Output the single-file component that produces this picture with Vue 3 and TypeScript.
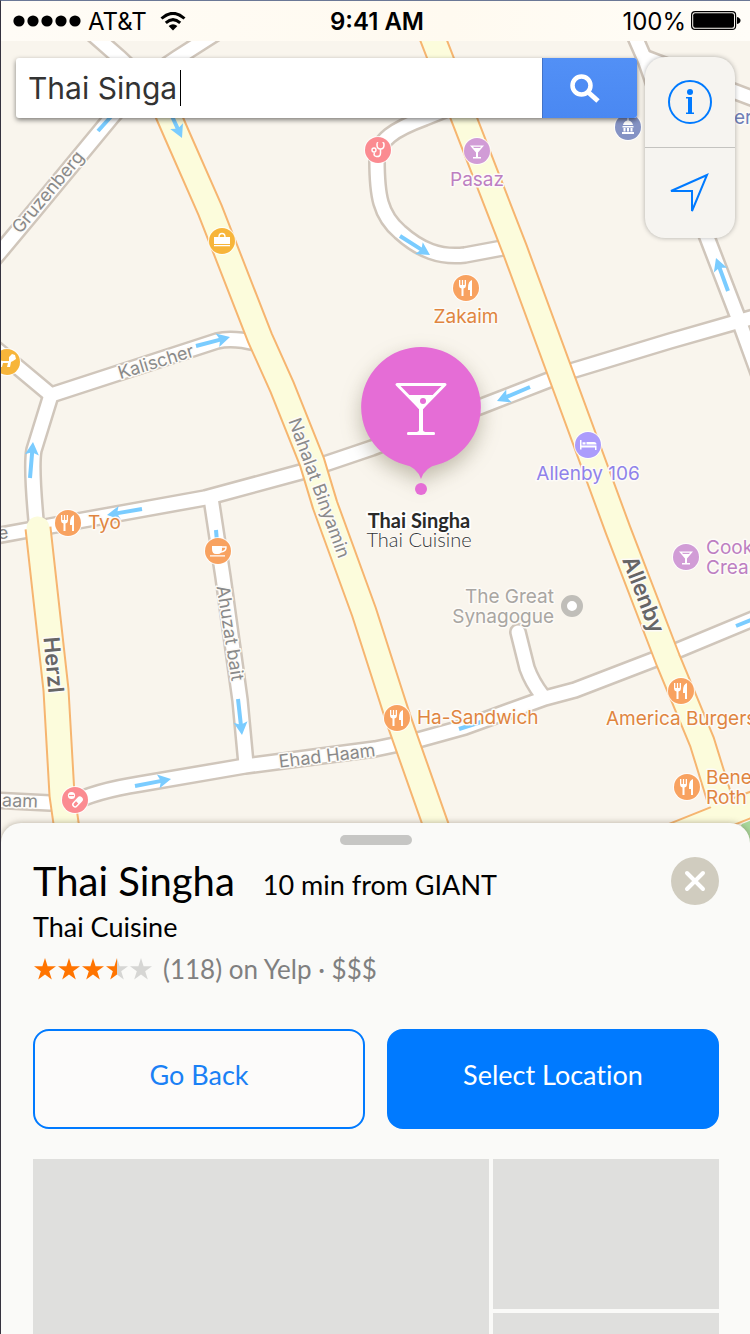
<script setup lang="ts">
import { ref } from 'vue'

interface Arrow { x1: number; y1: number; x2: number; y2: number; head: boolean }
interface Poi { icon: string; x: number; y: number; color: string }
interface Label { text: string; x: number; y: number; color: string; anchor?: string }
interface Street { text: string; x: number; y: number; angle: number; size: number; bold?: boolean }

const query = ref('Thai Singa')

const whiteRoads: string[] = [
  'M-12 266 L0 252 L35 210 L111 118 Q140 82 177 58 L224 28',
  'M88 30 L120 58 L160 96',
  'M-10 344 L51 395 L217 341 Q232 337 256 343',
  'M51 395 L34 450 Q31 465 36 520',
  'M-10 537 L50 526 L205 498 L301 472 L372 448 L482 406 L549 380 L571 371 L670 341 L733 323 L765 314',
  'M211 498 L223 577 L240 700 L246 764',
  'M-10 800 L50 803',
  'M70 804 Q95 791 140 784 L245 766 L375 749 L418 740 L465 727 L545 698 L575 690 L653 660 L676 651 L765 614',
  'M518 632 L527 668 Q532 682 542 695',
  'M450 108 L425 118 C395 129 377 140 377 160 C377 195 380 215 400 232 C420 250 440 258 465 255 L508 247',
  'M632 30 L646 62 L705 232 L737 315 L760 378',
  'M646 58 L765 103'
]

const yellowRoads: string[] = [
  'M160 96 L177 135 L210 210 L260 338 L282 387 L312 462 L325 505 L364 612 L389 690 L398 718 L435 823 L447 856',
  'M428 26 L515 250 L618 530 L668 660 L702 742 L720 800',
  'M38 528 L56 690 L62 795 L66 823 L72 856',
  'M630 853 L745 807 L770 798'
]

const arrows: Arrow[] = [
  { x1: 98, y1: 131, x2: 116, y2: 111, head: false },
  { x1: 171, y1: 114, x2: 182, y2: 138, head: true },
  { x1: 196, y1: 346, x2: 230, y2: 337, head: true },
  { x1: 30, y1: 478, x2: 33, y2: 442, head: true },
  { x1: 142, y1: 509, x2: 107, y2: 515, head: true },
  { x1: 216, y1: 530, x2: 217, y2: 542, head: false },
  { x1: 238, y1: 699, x2: 242, y2: 735, head: true },
  { x1: 135, y1: 786, x2: 171, y2: 779, head: true },
  { x1: 400, y1: 236, x2: 430, y2: 255, head: true },
  { x1: 530, y1: 387, x2: 497, y2: 401, head: true },
  { x1: 728, y1: 291, x2: 716, y2: 258, head: true },
  { x1: 459, y1: 729, x2: 484, y2: 721, head: false },
  { x1: 736, y1: 626, x2: 756, y2: 618, head: false }
]

function arrowTransform(a: Arrow): string {
  const angle = (Math.atan2(a.y2 - a.y1, a.x2 - a.x1) * 180) / Math.PI
  return `translate(${a.x2} ${a.y2}) rotate(${angle})`
}

function arrowPath(a: Arrow): string {
  const len = Math.hypot(a.x2 - a.x1, a.y2 - a.y1)
  return a.head
    ? `M0 0 L-13 -7 L-11 -2 H${-len} V2 H-11 L-13 7 Z`
    : `M0 -2 H${-len} V2 H0 Z`
}

const pois: Poi[] = [
  { icon: 'medical', x: 378, y: 150, color: '#fb8b91' },
  { icon: 'cocktail', x: 477, y: 151, color: '#d19cd6' },
  { icon: 'bank', x: 628, y: 127, color: '#8593c4' },
  { icon: 'bag', x: 222, y: 241, color: '#f7b53a' },
  { icon: 'food', x: 466, y: 288, color: '#f8a260' },
  { icon: 'dog', x: 7, y: 362, color: '#f7b53a' },
  { icon: 'bed', x: 588, y: 445, color: '#ab9cfc' },
  { icon: 'food', x: 68, y: 523, color: '#f8a260' },
  { icon: 'coffee', x: 218, y: 551, color: '#f8a260' },
  { icon: 'cocktail', x: 686, y: 557, color: '#d19cd6' },
  { icon: 'food', x: 681, y: 691, color: '#f8a260' },
  { icon: 'food', x: 397, y: 718, color: '#f8a260' },
  { icon: 'food', x: 687, y: 787, color: '#f8a260' },
  { icon: 'pill', x: 75, y: 800, color: '#fb8b91' }
]

const labels: Label[] = [
  { text: 'Pasaz', x: 477, y: 186, color: '#bd7fc2', anchor: 'middle' },
  { text: 'Zakaim', x: 466, y: 323, color: '#e08540', anchor: 'middle' },
  { text: 'Allenby 106', x: 588, y: 480, color: '#8f82ea', anchor: 'middle' },
  { text: 'Tyo', x: 88, y: 529, color: '#e08540' },
  { text: 'Cook', x: 706, y: 554, color: '#bd7fc2' },
  { text: 'Cream', x: 706, y: 574, color: '#bd7fc2' },
  { text: 'The Great', x: 554, y: 603, color: '#a9a6a2', anchor: 'end' },
  { text: 'Synagogue', x: 554, y: 623, color: '#a9a6a2', anchor: 'end' },
  { text: 'Ha-Sandwich', x: 417, y: 724, color: '#e08540' },
  { text: 'America Burgers', x: 606, y: 725, color: '#e08540' },
  { text: 'Bene', x: 706, y: 784, color: '#e08540' },
  { text: 'Roth', x: 706, y: 804, color: '#e08540' },
  { text: 'er', x: 734, y: 124, color: '#7080b8' }
]

const streets: Street[] = [
  { text: 'Gruzenberg', x: 48, y: 192, angle: -50, size: 18 },
  { text: 'Kalischer', x: 156, y: 362, angle: -17, size: 18 },
  { text: 'Nahalat Binyamin', x: 319, y: 488, angle: 70, size: 18 },
  { text: 'Ahuzat bait', x: 230, y: 633, angle: 81, size: 18 },
  { text: 'Ehad Haam', x: 327, y: 756, angle: -7, size: 18 },
  { text: 'aam', x: 20, y: 801, angle: 2, size: 18 },
  { text: 'e', x: 3, y: 533, angle: -7, size: 18 },
  { text: 'Herzl', x: 52, y: 665, angle: 85, size: 22, bold: true },
  { text: 'Allenby', x: 642, y: 595, angle: 69, size: 22, bold: true }
]

const stars: string[] = ['full', 'full', 'full', 'half', 'empty']
</script>

<template>
  <main class="page">
    <header class="status">
      <div class="status-left">
        <svg class="signal" viewBox="0 0 68 12" aria-hidden="true">
          <circle v-for="n in 5" :key="n" :cx="n * 14 - 8" cy="6" r="5.6" />
        </svg>
        <span>AT&amp;T</span>
        <svg class="wifi" viewBox="0 0 26 19" aria-hidden="true">
          <path d="M1.5 6.5 Q13 -3.800 24.500 6.500" />
          <path d="M5.800 10.800 Q13 4.400 20.200 10.800" />
          <path class="solid" d="M13 18.500 L8.600 13.900 Q13 10.400 17.400 13.900 Z" />
        </svg>
      </div>
      <span class="clock">9:41 AM</span>
      <div class="status-right">
        <span>100%</span>
        <svg class="battery" viewBox="0 0 50 20" aria-hidden="true">
          <rect x="0.600" y="0.600" width="44" height="17.800" rx="3.500" fill="none" stroke="#000" stroke-width="1.200" />
          <rect x="2.200" y="2.200" width="40.800" height="14.600" rx="2" />
          <path d="M46 6 Q49.500 7 49.500 9.500 Q49.500 12 46 13 Z" />
        </svg>
      </div>
    </header>

    <section class="map" aria-label="Map">
      <svg class="canvas" viewBox="1 41 749 812" preserveAspectRatio="xMidYMin slice">
        <defs>
          <g id="i-food">
            <path d="M-7 -8 V-3 Q-7 0 -4.500 0.500 V8 H-2.500 V0.500 Q0 0 0 -3 V-8 H-1.300 V-3 H-2.900 V-8 H-4.100 V-3 H-5.700 V-8 Z M6 -8 Q2 -7 2 0 V2 H4 V8 H6 Z" />
          </g>
          <g id="i-cocktail">
            <path d="M-7 -5.500 H7 L1 1.600 V6 H4 V7.500 H-4 V6 H-1 V1.600 Z M-4 -4.200 L-3 -3 H3 L4 -4.200 Z" fill-rule="evenodd" />
          </g>
          <g id="i-medical">
            <path d="M0 -7 Q-1 -8 -1 -5 Q-1 -1 2.500 -1 Q6 -1 6 -5 Q6 -8 4.500 -7 M2.500 -1 V3 Q2.500 7 -1.500 6.500 Q-5 6 -3.500 2.500" fill="none" stroke="#fff" stroke-width="1.500" />
            <circle cx="-4" cy="0" r="2" fill="none" stroke="#fff" stroke-width="1.400" />
          </g>
          <g id="i-bank">
            <path d="M-0.600 -9 H0.600 V-6.500 Q4 -6 5 -2 H-5 Q-4 -6 -0.600 -6.500 Z M-5.500 -1 H5.500 V0.500 H-5.500 Z M-4.500 1 H-2.500 V4.500 H-4.500 Z M-1 1 H1 V4.500 H-1 Z M2.500 1 H4.500 V4.500 H2.500 Z M-6 5 H6 V7 H-6 Z" />
          </g>
          <g id="i-bag">
            <path d="M-8 -4 H8 V3 H-8 Z M-8 4 H8 V5.200 H-8 Z" />
            <path d="M-3 -4 Q-3 -7.500 0 -7.500 Q3 -7.500 3 -4" fill="none" stroke="#fff" stroke-width="1.400" />
          </g>
          <g id="i-dog">
            <path d="M-8 -1 Q-6 -2 -4 -1 L2 -1 L2 -5 L5 -8 L8 -7 L9 -3 L6 -1 L4 0 L3 5 H0 L1 1 L-4 1 L-5 5 H-8 Z" />
          </g>
          <g id="i-bed">
            <path d="M-8 -5 H-6.500 V0.500 H8.500 V5 H7 V2.500 H-6.500 V4.500 H-8 Z M-5.500 -2.800 H-2.500 V-0.500 H-5.500 Z M-1.500 -3 H6 Q8.500 -3 8.500 -0.500 H-1.500 Z" />
          </g>
          <g id="i-coffee">
            <path d="M-6 -5 H4 V-2 Q4 3 0 3 H-2 Q-6 3 -6 -2 Z M-8 4.200 H7 V5.600 H-8 Z" />
            <path d="M4 -4 H8 Q8.500 0 3 1" fill="none" stroke="#fff" stroke-width="1.400" />
          </g>
          <g id="i-pill">
            <circle cx="-3.500" cy="-4.500" r="3.600" />
            <path d="M-6 -4.500 H-1" stroke="#fb8b91" stroke-width="1.200" />
            <g transform="translate(2.500 2) rotate(-48)">
              <rect x="-6.500" y="-3" width="13" height="6" rx="3" />
              <path d="M-0.500 -1.500 H-3.500 A1.500 1.500 0 0 0 -3.500 1.500 H-0.500 Z" fill="#fb8b91" />
            </g>
          </g>
        </defs>

        <rect x="-400" width="1600" height="860" fill="#f9f5ed" />
        <path d="M720 860 L742 824 L800 800 V860 Z" fill="#a9d89b" />
        <g class="road casing"><path v-for="d in whiteRoads" :key="d" :d="d" /></g>
        <g class="road fill"><path v-for="d in whiteRoads" :key="d" :d="d" /></g>
        <g class="avenue casing"><path v-for="d in yellowRoads" :key="d" :d="d" /></g>
        <g class="avenue fill"><path v-for="d in yellowRoads" :key="d" :d="d" /></g>
        <path v-for="(a, i) in arrows" :key="i" :d="arrowPath(a)" :transform="arrowTransform(a)" fill="#7accff" />

        <text
          v-for="s in streets" :key="s.text" class="street" :class="{ bold: s.bold }"
          :font-size="s.size" :transform="`translate(${s.x} ${s.y}) rotate(${s.angle})`"
          text-anchor="middle" dy="6"
        >{{ s.text }}</text>

        <g v-for="(p, i) in pois" :key="i" :transform="`translate(${p.x} ${p.y})`">
          <circle r="14" fill="#fff" opacity="0.800" />
          <circle r="13" :fill="p.color" />
          <use :href="`#i-${p.icon}`" fill="#fff" />
        </g>
        <circle cx="572" cy="606" r="8" fill="#fff" stroke="#c0beb9" stroke-width="6" />

        <text
          v-for="l in labels" :key="l.text" class="place" :x="l.x" :y="l.y"
          :fill="l.color" :text-anchor="l.anchor ?? 'start'"
        >{{ l.text }}</text>

        <g class="pin">
          <path d="M421 347 A60 60 0 0 1 438 464.500 Q425 467 421 479 Q417 467 404 464.500 A60 60 0 0 1 421 347 Z" />
        </g>
        <circle cx="421" cy="489" r="6" fill="#e56dd6" />
        <path d="M397 384.500 H445 L421 409 Z" fill="none" stroke="#fff" stroke-width="3" stroke-linejoin="round" />
        <path d="M407 395 H435 L423 409 V430 Q423 432 427 432 H434 Q435 432 435 433.500 Q435 435 434 435 H408 Q407 435 407 433.500 Q407 432 408 432 H415 Q419 432 419 430 V409 Z" fill="#fff" />
        <circle cx="423" cy="401" r="3" fill="#e56dd6" />
        <text class="pin-name" x="419" y="528" text-anchor="middle">Thai Singha</text>
        <text class="pin-kind" x="419" y="547" text-anchor="middle">Thai Cuisine</text>
      </svg>

      <div class="overlay">
        <form class="search" @submit.prevent>
          <label class="field">
            <input v-model="query" type="text" aria-label="Search places" />
            <span class="caret" aria-hidden="true"></span>
          </label>
          <button class="go" type="submit" aria-label="Search">
            <svg viewBox="0 0 30 30" aria-hidden="true">
              <circle cx="11.500" cy="11.500" r="9" fill="none" stroke="#fff" stroke-width="4.500" />
              <path d="M18.500 18.500 L28 27" stroke="#fff" stroke-width="5" />
            </svg>
          </button>
        </form>
        <div class="controls">
          <button type="button" aria-label="Map information">
            <svg viewBox="0 0 44 44" aria-hidden="true">
              <circle cx="22" cy="22" r="21" fill="none" stroke="#007aff" stroke-width="2" />
              <circle cx="22" cy="12" r="3" fill="#007aff" />
              <path d="M18 17 H24 V32.500 H26 V34 H18 V32.500 H20 V18.500 H18 Z" fill="#007aff" />
            </svg>
          </button>
          <button type="button" aria-label="My location">
            <svg viewBox="0 0 44 44" aria-hidden="true">
              <path d="M3 20 L39 4 L24 40 V20 Z" fill="none" stroke="#007aff" stroke-width="2" />
            </svg>
          </button>
        </div>
      </div>
    </section>

    <section class="sheet">
      <div class="handle"></div>
      <div class="heading">
        <h1>Thai Singha</h1>
        <p class="distance">10 min from GIANT</p>
        <button class="close" type="button" aria-label="Close">
          <svg viewBox="0 0 24 24" aria-hidden="true"><path d="M4 4 L20 20 M20 4 L4 20" /></svg>
        </button>
      </div>
      <p class="kind">Thai Cuisine</p>
      <div class="rating">
        <svg class="stars" viewBox="0 0 120 24" role="img" aria-label="3.5 of 5 stars">
          <defs>
            <linearGradient id="half">
              <stop offset="0.500" stop-color="#ff7400" />
              <stop offset="0.500" stop-color="#d6d6d4" />
            </linearGradient>
          </defs>
          <path
            v-for="(s, i) in stars" :key="i" :class="s" :transform="`translate(${i * 24} 0)`"
            d="M12 1 L14.600 9.200 H23 L16.200 14.200 L18.800 22.500 L12 17.400 L5.200 22.500 L7.800 14.200 L1 9.200 H9.400 Z"
          />
        </svg>
        <span>(118) on Yelp · $$$</span>
      </div>
      <div class="actions">
        <button class="back" type="button">Go Back</button>
        <button class="select" type="button">Select Location</button>
      </div>
      <div class="photos">
        <div class="photo large"></div>
        <div class="photo"></div>
        <div class="photo"></div>
      </div>
    </section>
  </main>
</template>

<style>
body {
  margin: 0;
  background: #fafaf8;
}
</style>

<style scoped>
.page {
  box-sizing: border-box;
  display: flex;
  flex-direction: column;
  min-height: 100vh;
  border-top: 1px solid #6b7896;
  border-left: 1px solid #35323f;
  font-family: Lato, "Open Sans", sans-serif;
  font-variant-ligatures: no-common-ligatures;
  overflow: hidden;
}
h1, p { margin: 0; font-weight: 400; }
button { font: inherit; font-variant-ligatures: inherit; padding: 0; border: 0; cursor: pointer; }

.status {
  display: grid;
  grid-template-columns: 1fr auto 1fr;
  align-items: center;
  height: 40px;
  padding: 0 9px 0 12px;
  background: linear-gradient(90deg, #fffcf6, #fffaf0 60%, #fffdf8);
  font: 400 24px Inter, Roboto, sans-serif;
  color: #000;
}
.status-left, .status-right { display: flex; align-items: center; }
.status-left { gap: 7px; }
.status-right { justify-content: flex-end; gap: 5px; }
.signal { width: 68px; height: 12px; }
.wifi { width: 26px; height: 19px; margin-left: 6px; fill: none; stroke: #000; stroke-width: 3; }
.wifi .solid { fill: #000; stroke: none; }
.battery { width: 50px; height: 20px; }
.clock { font-weight: 600; }

.map { display: grid; height: 812px; }
.map > * { grid-area: 1 / 1; min-width: 0; }
.canvas { display: block; width: 100%; height: 812px; }
.road, .avenue { fill: none; stroke-linejoin: round; stroke-linecap: round; }
.road.casing { stroke: #d0c6bb; stroke-width: 18px; }
.road.fill { stroke: #fff; stroke-width: 13px; }
.avenue.casing { stroke: #f6b570; stroke-width: 27px; stroke-linecap: butt; }
.avenue.fill { stroke: #fcfcdc; stroke-width: 23px; }
.street, .place {
  font-family: Inter, Roboto, sans-serif;
  paint-order: stroke;
  stroke: #fdfbf7;
  stroke-width: 3px;
  stroke-linejoin: round;
}
.street { fill: #8a8a8a; }
.street.bold { font-weight: 600; fill: #666; }
.place { font-size: 19px; }
.pin { fill: #e56dd6; filter: drop-shadow(0 8px 10px rgba(90, 80, 50, 0.35)); }
.pin-name, .pin-kind {
  font-family: Lato, sans-serif;
  font-size: 20px;
  paint-order: stroke;
  stroke: #fff;
  stroke-width: 4px;
  stroke-linejoin: round;
}
.pin-name { font-weight: 700; fill: #2a2a2a; }
.pin-kind { font-weight: 300; fill: #333; stroke-width: 1px; }

.overlay {
  display: flex;
  align-items: flex-start;
  gap: 8px;
  padding: 16px 15px 0;
}
.search {
  display: flex;
  flex: 1;
  min-width: 0;
  height: 60px;
  margin-top: 1px;
  border-radius: 3px;
  overflow: hidden;
  background: #fff;
  box-shadow: 0 2px 5px rgba(0, 0, 0, 0.5);
}
.field {
  display: flex;
  flex: 1;
  min-width: 0;
  align-items: center;
  gap: 3px;
  padding-left: 12px;
}
.field input {
  field-sizing: content;
  min-width: 0;
  padding: 0;
  border: 0;
  outline: 0;
  background: none;
  font: 400 30px Inter, sans-serif;
  color: #333;
}
.caret { width: 1px; height: 36px; background: #000; }
.field input:focus + .caret { visibility: hidden; }
.go {
  display: flex;
  align-items: center;
  justify-content: center;
  width: 95px;
  padding: 2px 10px 0 0;
  border-left: 1px solid #4273c8;
  background: linear-gradient(#5290f6, #4a88f2);
}
.go svg { width: 30px; height: 30px; }
.controls {
  display: flex;
  flex-direction: column;
  width: 90px;
  border-radius: 20px;
  background: #f6f4f0;
  box-shadow: 0 0 5px rgba(0, 0, 0, 0.3);
}
.controls button {
  display: flex;
  align-items: center;
  justify-content: center;
  height: 90px;
  background: none;
}
.controls button + button { height: 91px; border-top: 1px solid #c4c3c0; }
.controls svg { width: 44px; height: 44px; }

.sheet {
  position: relative;
  display: flex;
  flex: 1;
  flex-direction: column;
  margin-top: -30px;
  padding: 12px 31px 0 32px;
  border-radius: 20px 20px 0 0;
  background: #fafaf8;
  box-shadow: 0 0 6px rgba(90, 80, 60, 0.45);
  color: #000;
}
.handle {
  align-self: center;
  width: 72px;
  height: 10px;
  border-radius: 5px;
  background: #c6c6c4;
}
.heading {
  display: flex;
  align-items: center;
  gap: 28px;
  height: 48px;
  margin-top: 12px;
}
h1 { font-size: 40px; line-height: 48px; }
.distance { flex: 1; padding-top: 8px; font-size: 27px; line-height: 40px; }
.close {
  display: flex;
  align-items: center;
  justify-content: center;
  width: 48px;
  height: 48px;
  border-radius: 50%;
  background: #d0ccbf;
}
.close svg { width: 24px; height: 24px; fill: none; stroke: #fff; stroke-width: 4; stroke-linecap: round; }
.kind { margin-top: 4px; font-size: 27px; line-height: 36px; }
.rating {
  display: flex;
  align-items: center;
  gap: 10px;
  margin-top: 6px;
  font-size: 26px;
  line-height: 36px;
  color: #808080;
}
.stars { width: 120px; height: 24px; }
.full { fill: #ff7400; }
.half { fill: url(#half); }
.empty { fill: #d6d6d4; }
.actions { display: flex; gap: 22px; margin-top: 42px; }
.actions button {
  box-sizing: border-box;
  flex: 1;
  height: 100px;
  padding-bottom: 10px;
  border: 2px solid #007aff;
  border-radius: 16px;
  font-size: 27px;
}
.back { background: #fcfbfa; color: #1a80f5; }
.select { background: #007aff; color: #fff; }
.photos {
  display: grid;
  flex: 1;
  grid-template-columns: 228fr 113fr;
  grid-template-rows: 150px minmax(20px, 1fr);
  gap: 4px;
  margin-top: 30px;
}
.photo { background: #dfdfdd; }
.large { grid-row: span 2; }
</style>
